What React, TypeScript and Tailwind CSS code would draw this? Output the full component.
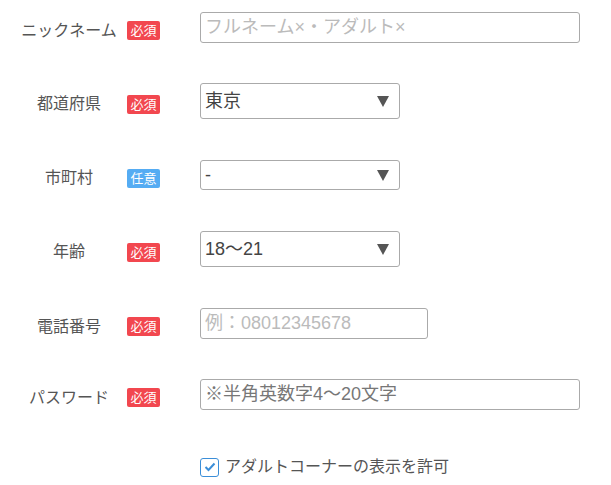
import React from "react";

const FONT = { fontFamily: '"Liberation Sans", "Noto Sans CJK JP", sans-serif' };

function Badge({ required }: { required: boolean }) {
  return (
    <span
      className={`flex h-[19px] w-[33px] items-center justify-center rounded-[2px] text-[13px] leading-none text-white ${
        required ? "bg-[#f2474f]" : "bg-[#55acf3]"
      }`}
    >
      {required ? "必須" : "任意"}
    </span>
  );
}

function Row({
  label,
  required,
  children,
  className,
}: {
  label: string;
  required: boolean;
  children: React.ReactNode;
  className?: string;
}) {
  return (
    <div className={`flex items-center ${className ?? ""}`}>
      <div className="flex w-[200px] items-center pt-[6px]">
        <div className="w-[114px] ml-[12px] text-center text-[16px] text-[#555]">{label}</div>
        <div className="ml-[1px]">
          <Badge required={required} />
        </div>
      </div>
      {children}
    </div>
  );
}

function Arrow() {
  return (
    <svg width="12" height="11" viewBox="0 0 12 11" className="shrink-0">
      <polygon points="0,0 12,0 6,11" fill="#555" />
    </svg>
  );
}

function Select({ value, h }: { value: string; h: string }) {
  return (
    <div
      className={`flex w-[200px] items-center justify-between rounded-[3px] border border-[#aaa] bg-white pl-[4px] pr-[10px] text-[18px] text-[#444] ${h}`}
    >
      <span>{value}</span>
      <Arrow />
    </div>
  );
}

function Input({ text, color, w }: { text: string; color: string; w: string }) {
  return (
    <div
      className={`flex h-[31px] items-center rounded-[3px] border border-[#aaa] bg-white pl-[4px] text-[18px] ${w} ${color}`}
    >
      {text}
    </div>
  );
}

export default function App() {
  return (
    <div className="h-[485px] w-[611px] bg-white" style={FONT}>
      <div className="flex flex-col pt-[12px]">
        <Row label="ニックネーム" required>
          <Input text="フルネーム×・アダルト×" color="text-[#bbb]" w="w-[380px]" />
        </Row>
        <Row label="都道府県" required className="mt-[40px]">
          <Select value="東京" h="h-[36px]" />
        </Row>
        <Row label="市町村" required={false} className="mt-[41px]">
          <Select value="-" h="h-[30px]" />
        </Row>
        <Row label="年齢" required className="mt-[41px]">
          <Select value="18～21" h="h-[36px]" />
        </Row>
        <Row label="電話番号" required className="mt-[41px]">
          <Input text="例：08012345678" color="text-[#bbb]" w="w-[228px]" />
        </Row>
        <Row label="パスワード" required className="mt-[40px]">
          <Input text="※半角英数字4～20文字" color="text-[#777]" w="w-[380px]" />
        </Row>
        <div className="mt-[45px] flex items-center pl-[200px]">
          <span className="flex h-[19px] w-[19px] items-center justify-center rounded-[3px] border border-[#3b8ed8] bg-white">
            <svg width="12" height="10" viewBox="0 0 12 10">
              <polyline points="1.5,5 4.5,8 10.5,1.5" fill="none" stroke="#3b8ed8" strokeWidth="2" />
            </svg>
          </span>
          <span className="ml-[6px] text-[16px] text-[#555]">アダルトコーナーの表示を許可</span>
        </div>
      </div>
    </div>
  );
}
